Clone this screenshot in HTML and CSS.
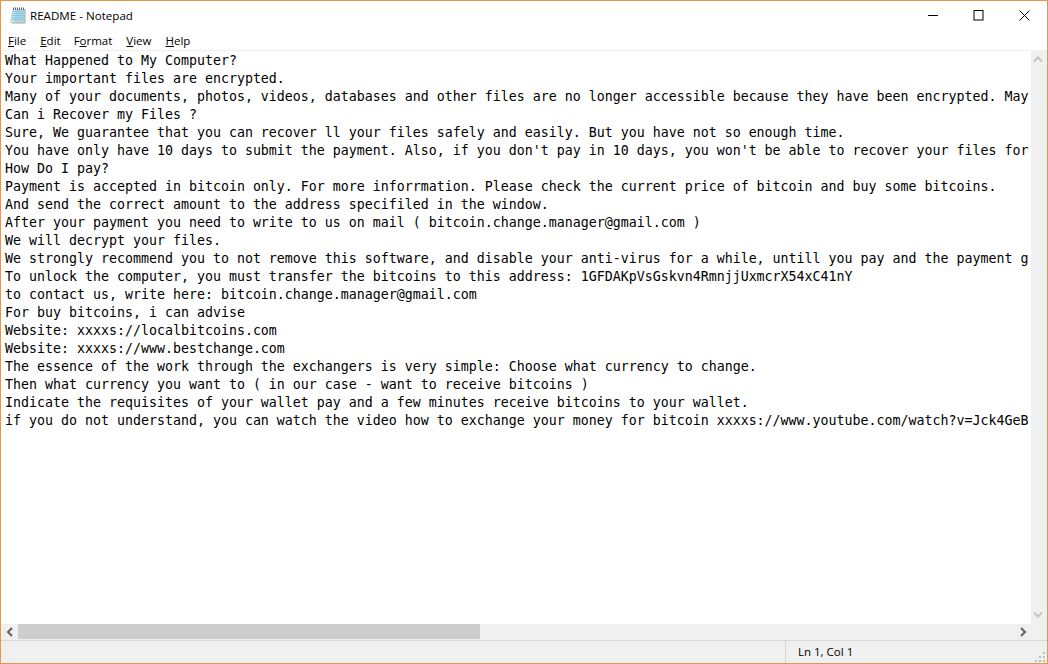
FILE: index.html
```html
<!DOCTYPE html>
<html lang="en">
<head>
<meta charset="utf-8">
<title>README - Notepad</title>
<link rel="stylesheet" href="styles.css">
</head>
<body>
<div class="window">
  <header class="titlebar">
    <svg class="app-icon" width="17" height="18" viewBox="0 0 17 18">
      <path d="M4 2h12.500v14.500H2.500z" fill="#b9ab84"/>
      <path d="M4 2h11.500v13.500H1z" fill="#a9d9ec"/>
      <path d="M4 2h3.500L4.500 15.500H1z" fill="#c4e7f3"/>
      <path d="M3.500 4.500h11.500M3.200 6.500h11.800M2.800 8.500h12.200M2.300 10.500h12.700M1.800 12.500h13.200" stroke="#86bdd6" stroke-width=".8"/>
      <path d="M4.500 0.500v2.500M6.500 0.500v2.500M8.500 0.500v2.500M10.500 0.500v2.500M12.500 0.500v2.500M14.500 0.500v2.500" stroke="#555" stroke-width=".9"/>
    </svg>
    <span class="title">README - Notepad</span>
    <div class="controls">
      <button class="ctl"><svg class="ctl-icon" width="11" height="11" viewBox="0 0 11 11"><path d="M1 5.500h10" stroke="#000" stroke-width="1"/></svg></button>
      <button class="ctl"><svg class="ctl-icon" width="11" height="11" viewBox="0 0 11 11"><rect x="1" y="0.500" width="9" height="9.500" fill="none" stroke="#000"/></svg></button>
      <button class="ctl"><svg class="ctl-icon" width="11" height="11" viewBox="0 0 11 11"><path d="M0.500 0.500l10 10M10.500 0.500l-10 10" stroke="#000" stroke-width="1"/></svg></button>
    </div>
  </header>
  <nav class="menubar">
    <span class="menu-item"><u>F</u>ile</span>
    <span class="menu-item"><u>E</u>dit</span>
    <span class="menu-item">F<u>o</u>rmat</span>
    <span class="menu-item"><u>V</u>iew</span>
    <span class="menu-item"><u>H</u>elp</span>
  </nav>
  <main class="editor-row">
    <div class="editor-pane">
    <pre class="editor">What Happened to My Computer?
Your important files are encrypted.
Many of your documents, photos, videos, databases and other files are no longer accessible because they have been encrypted. May
Can i Recover my Files ?
Sure, We guarantee that you can recover ll your files safely and easily. But you have not so enough time.
You have only have 10 days to submit the payment. Also, if you don't pay in 10 days, you won't be able to recover your files for
How Do I pay?
Payment is accepted in bitcoin only. For more inforrmation. Please check the current price of bitcoin and buy some bitcoins.
And send the correct amount to the address specifiled in the window.
After your payment you need to write to us on mail ( bitcoin.change.manager@gmail.com )
We will decrypt your files.
We strongly recommend you to not remove this software, and disable your anti-virus for a while, untill you pay and the payment g
To unlock the computer, you must transfer the bitcoins to this address: 1GFDAKpVsGskvn4RmnjjUxmcrX54xC41nY
to contact us, write here: bitcoin.change.manager@gmail.com
For buy bitcoins, i can advise
Website: xxxxs://localbitcoins.com
Website: xxxxs://www.bestchange.com
The essence of the work through the exchangers is very simple: Choose what currency to change.
Then what currency you want to ( in our case - want to receive bitcoins )
Indicate the requisites of your wallet pay and a few minutes receive bitcoins to your wallet.
if you do not understand, you can watch the video how to exchange your money for bitcoin xxxxs://www.youtube.com/watch?v=Jck4GeB</pre>
    </div>
    <div class="vscroll">
      <svg width="16" height="16" viewBox="0 0 16 16"><path d="M3 9.500l4-4 4 4" fill="none" stroke="#c4c4c4" stroke-width="2"/></svg>
      <svg width="16" height="16" viewBox="0 0 16 16"><path d="M3 6.500l4 4 4-4" fill="none" stroke="#c4c4c4" stroke-width="2"/></svg>
    </div>
  </main>
  <div class="hscroll">
    <div class="hs-btn"><svg width="16" height="16" viewBox="0 0 16 16"><path d="M10 4l-4 4 4 4" fill="none" stroke="#606060" stroke-width="2"/></svg></div>
    <div class="hs-track"><div class="hs-thumb"></div></div>
    <div class="hs-btn"><svg width="16" height="16" viewBox="0 0 16 16"><path d="M6 4l4 4-4 4" fill="none" stroke="#606060" stroke-width="2"/></svg></div>
    <div class="hs-corner"></div>
  </div>
  <footer class="statusbar">
    <div class="st-pos">Ln 1, Col 1</div>
    <svg class="grip" width="11" height="11" viewBox="0 0 11 11"><path d="M8 1h2v2H8zM4 5h2v2H4zM8 5h2v2H8zM0 9h2v2H0zM4 9h2v2H4zM8 9h2v2H8z" fill="#bdbdbd"/></svg>
  </footer>
</div>
</body>
</html>
```
FILE: styles.css
```css
* { box-sizing: border-box; }
html, body { margin: 0; padding: 0; height: 100%; background: #fff; }
.window {
  width: 1048px; height: 664px;
  border: 1px solid #e8954c;
  display: flex; flex-direction: column;
  font-family: "Open Sans", "Noto Sans", "Liberation Sans", sans-serif;
  overflow: hidden;
}
.titlebar { height: 29px; display: flex; align-items: center; padding-left: 8px; flex: none; }
.app-icon { flex: none; }
.title { margin-left: 4px; font-size: 11.6px; color: #000; }
.controls { margin-left: auto; display: flex; align-self: flex-start; }
.ctl { width: 46px; height: 29px; padding: 0; border: 0; background: none; display: flex; align-items: center; justify-content: center; }
.ctl-icon { overflow: visible; }
.menubar { height: 20px; display: flex; gap: 14px; padding: 1px 0 0 7px; font-size: 11.5px; color: #000; flex: none; align-items: center; }
.menu-item:nth-child(3) { margin-left: -1px; }
.menubar u { text-underline-offset: 1px; }
.editor-row { display: flex; flex: 1; min-height: 0; border-top: 1px solid #f0f0f0; }
.editor-pane { flex: 1; min-width: 0; padding: 1px 0 0 4px; }
.editor {
  margin: 0; overflow: visible;
  font-family: "DejaVu Sans Mono", "Liberation Mono", monospace;
  font-size: 13.29px; line-height: 18px; color: #000; white-space: pre;
}
.vscroll { width: 16px; flex: none; background: #f0f0f0; display: flex; flex-direction: column; justify-content: space-between; padding: 1px 0 2px; }
.hscroll { height: 17px; flex: none; background: #f0f0f0; display: flex; align-items: stretch; border-bottom: 1px solid #d7d7d7; }
.hs-btn { width: 17px; flex: none; display: flex; align-items: center; justify-content: center; }
.hs-track { flex: 1; min-width: 0; }
.hs-thumb { width: 462px; height: 15px; background: #cdcdcd; }
.hs-corner { width: 16px; flex: none; }
.statusbar { height: 22px; flex: none; background: #f0f0f0; display: flex; align-items: center; position: relative; font-size: 11.5px; color: #000; padding-left: 784px; }
.st-pos { height: 100%; border-left: 1px solid #d7d7d7; padding: 0 0 2px 12px; display: flex; align-items: center; }
.grip { position: absolute; right: 1px; bottom: 1px; }
```
